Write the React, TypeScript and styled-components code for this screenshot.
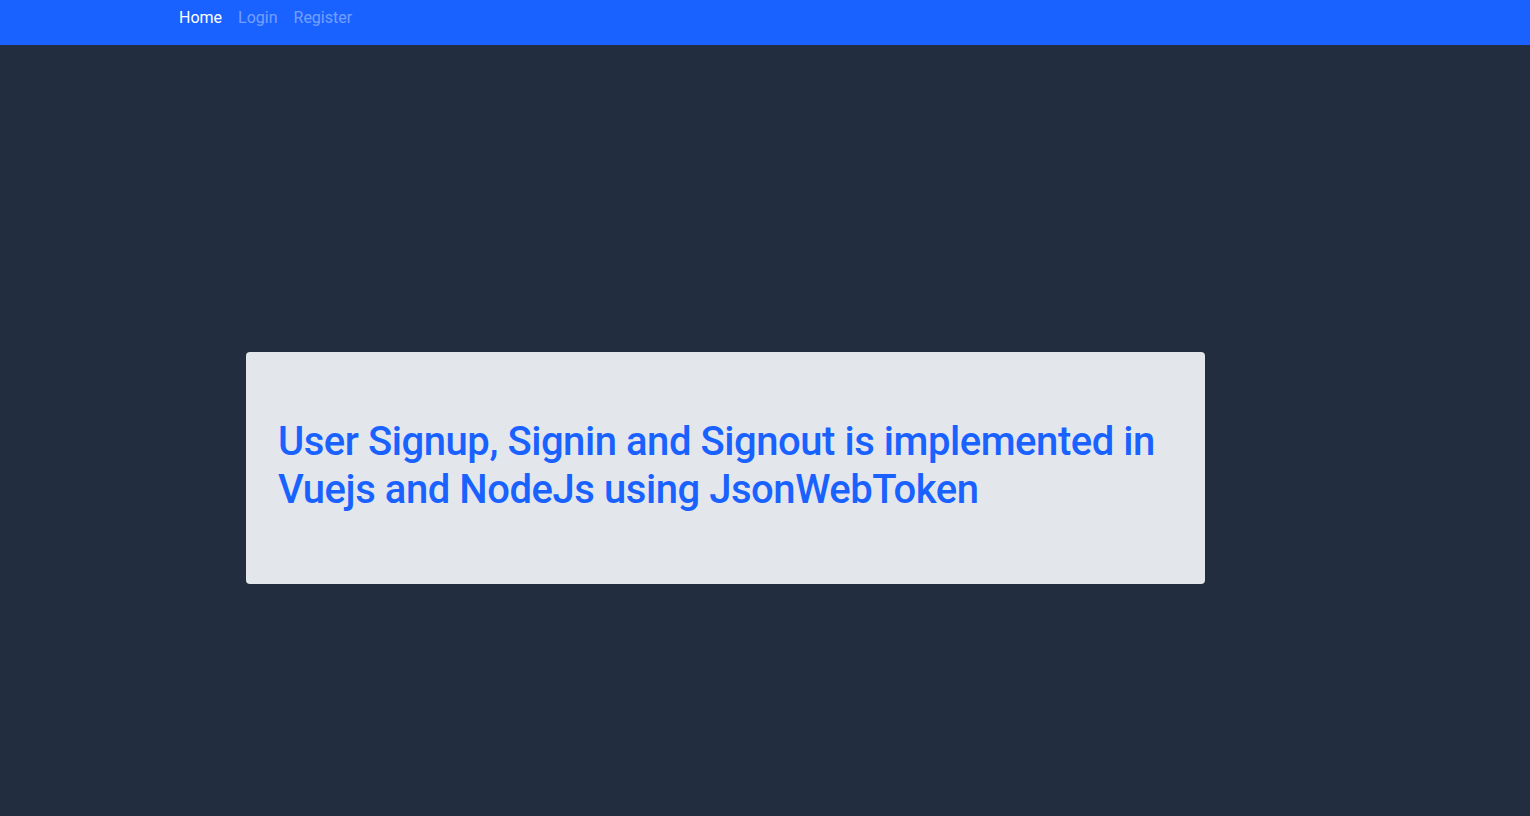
import React from "react";
import styled, { createGlobalStyle } from "styled-components";

const Global = createGlobalStyle`
  html, body { margin: 0; padding: 0; }
  body {
    background: #222e3f;
    font-family: Roboto, "Noto Sans", sans-serif;
    min-height: 816px;
  }
`;

const NavBar = styled.nav`
  height: 45px;
  background: #1a62ff;
  display: flex;
  align-items: flex-start;
  padding: 0 0 0 171px;
  box-sizing: border-box;
`;

const NavLink = styled.a<{ $active?: boolean }>`
  display: block;
  padding: 8px 8px 7px;
  font-size: 16px;
  line-height: 20px;
  font-weight: 400;
  text-decoration: none;
  color: ${(p) => (p.$active ? "#ffffff" : "rgba(255,255,255,0.4)")};
  cursor: pointer;
`;

const Main = styled.main`
  padding: 307px 0 0 246px;
`;

const Card = styled.section`
  width: 959px;
  box-sizing: border-box;
  background: #e3e7ec;
  border-radius: 4px;
  padding: 64px 32px;
`;

const Heading = styled.h1`
  margin: 0 0 8px;
  font-size: 40px;
  line-height: 48px;
  font-weight: 500;
  color: #1a62ff;
  letter-spacing: -0.45px;
  padding-top: 2px;
  margin-bottom: 6px;
`;

export default function App() {
  return (
    <>
      <Global />
      <NavBar>
        <NavLink $active>Home</NavLink>
        <NavLink>Login</NavLink>
        <NavLink>Register</NavLink>
      </NavBar>
      <Main>
        <Card>
          <Heading>
            User Signup, Signin and Signout is implemented in Vuejs and NodeJs using JsonWebToken
          </Heading>
        </Card>
      </Main>
    </>
  );
}
